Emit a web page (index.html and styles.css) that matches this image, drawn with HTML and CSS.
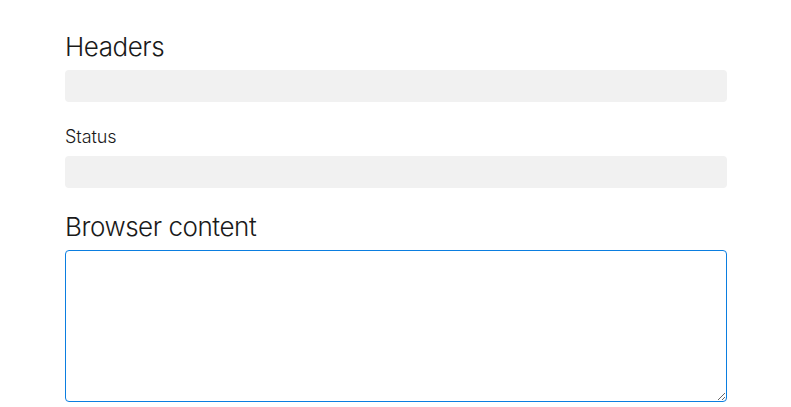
FILE: index.html
```html
<!DOCTYPE html>
<html>
<head>
<meta charset="utf-8">
<link rel="stylesheet" href="styles.css">
</head>
<body>
<main class="panel">
  <h2 class="heading">Headers</h2>
  <div class="field"></div>
  <label class="label">Status</label>
  <div class="field"></div>
  <h2 class="heading heading-second">Browser content</h2>
  <textarea class="content"></textarea>
</main>
</body>
</html>
```
FILE: styles.css
```css
html, body {
  margin: 0;
  padding: 0;
  background: #ffffff;
}
body {
  font-family: Inter, "Noto Sans", "Liberation Sans", sans-serif;
  color: #1a1a1a;
}
.panel {
  display: flex;
  flex-direction: column;
  width: 662px;
  padding: 31px 0 0 65px;
}
.heading {
  margin: 0 0 7px 0;
  font-size: 26px;
  line-height: 32px;
  font-weight: 300;
  letter-spacing: -0.45px;
}
.heading-second {
  margin-top: 23px;
}
.field {
  height: 32px;
  border-radius: 4px;
  background: #f1f1f1;
}
.label {
  margin: 23px 0 7px 0;
  font-size: 18px;
  line-height: 24px;
  font-weight: 350;
  letter-spacing: -0.1px;
}
.content {
  box-sizing: border-box;
  width: 662px;
  height: 152px;
  margin: 0;
  border: 1px solid #0b7ee0;
  border-radius: 4px;
  outline: none;
  background: #fff;
  padding: 4px;
  font-family: inherit;
}
```
